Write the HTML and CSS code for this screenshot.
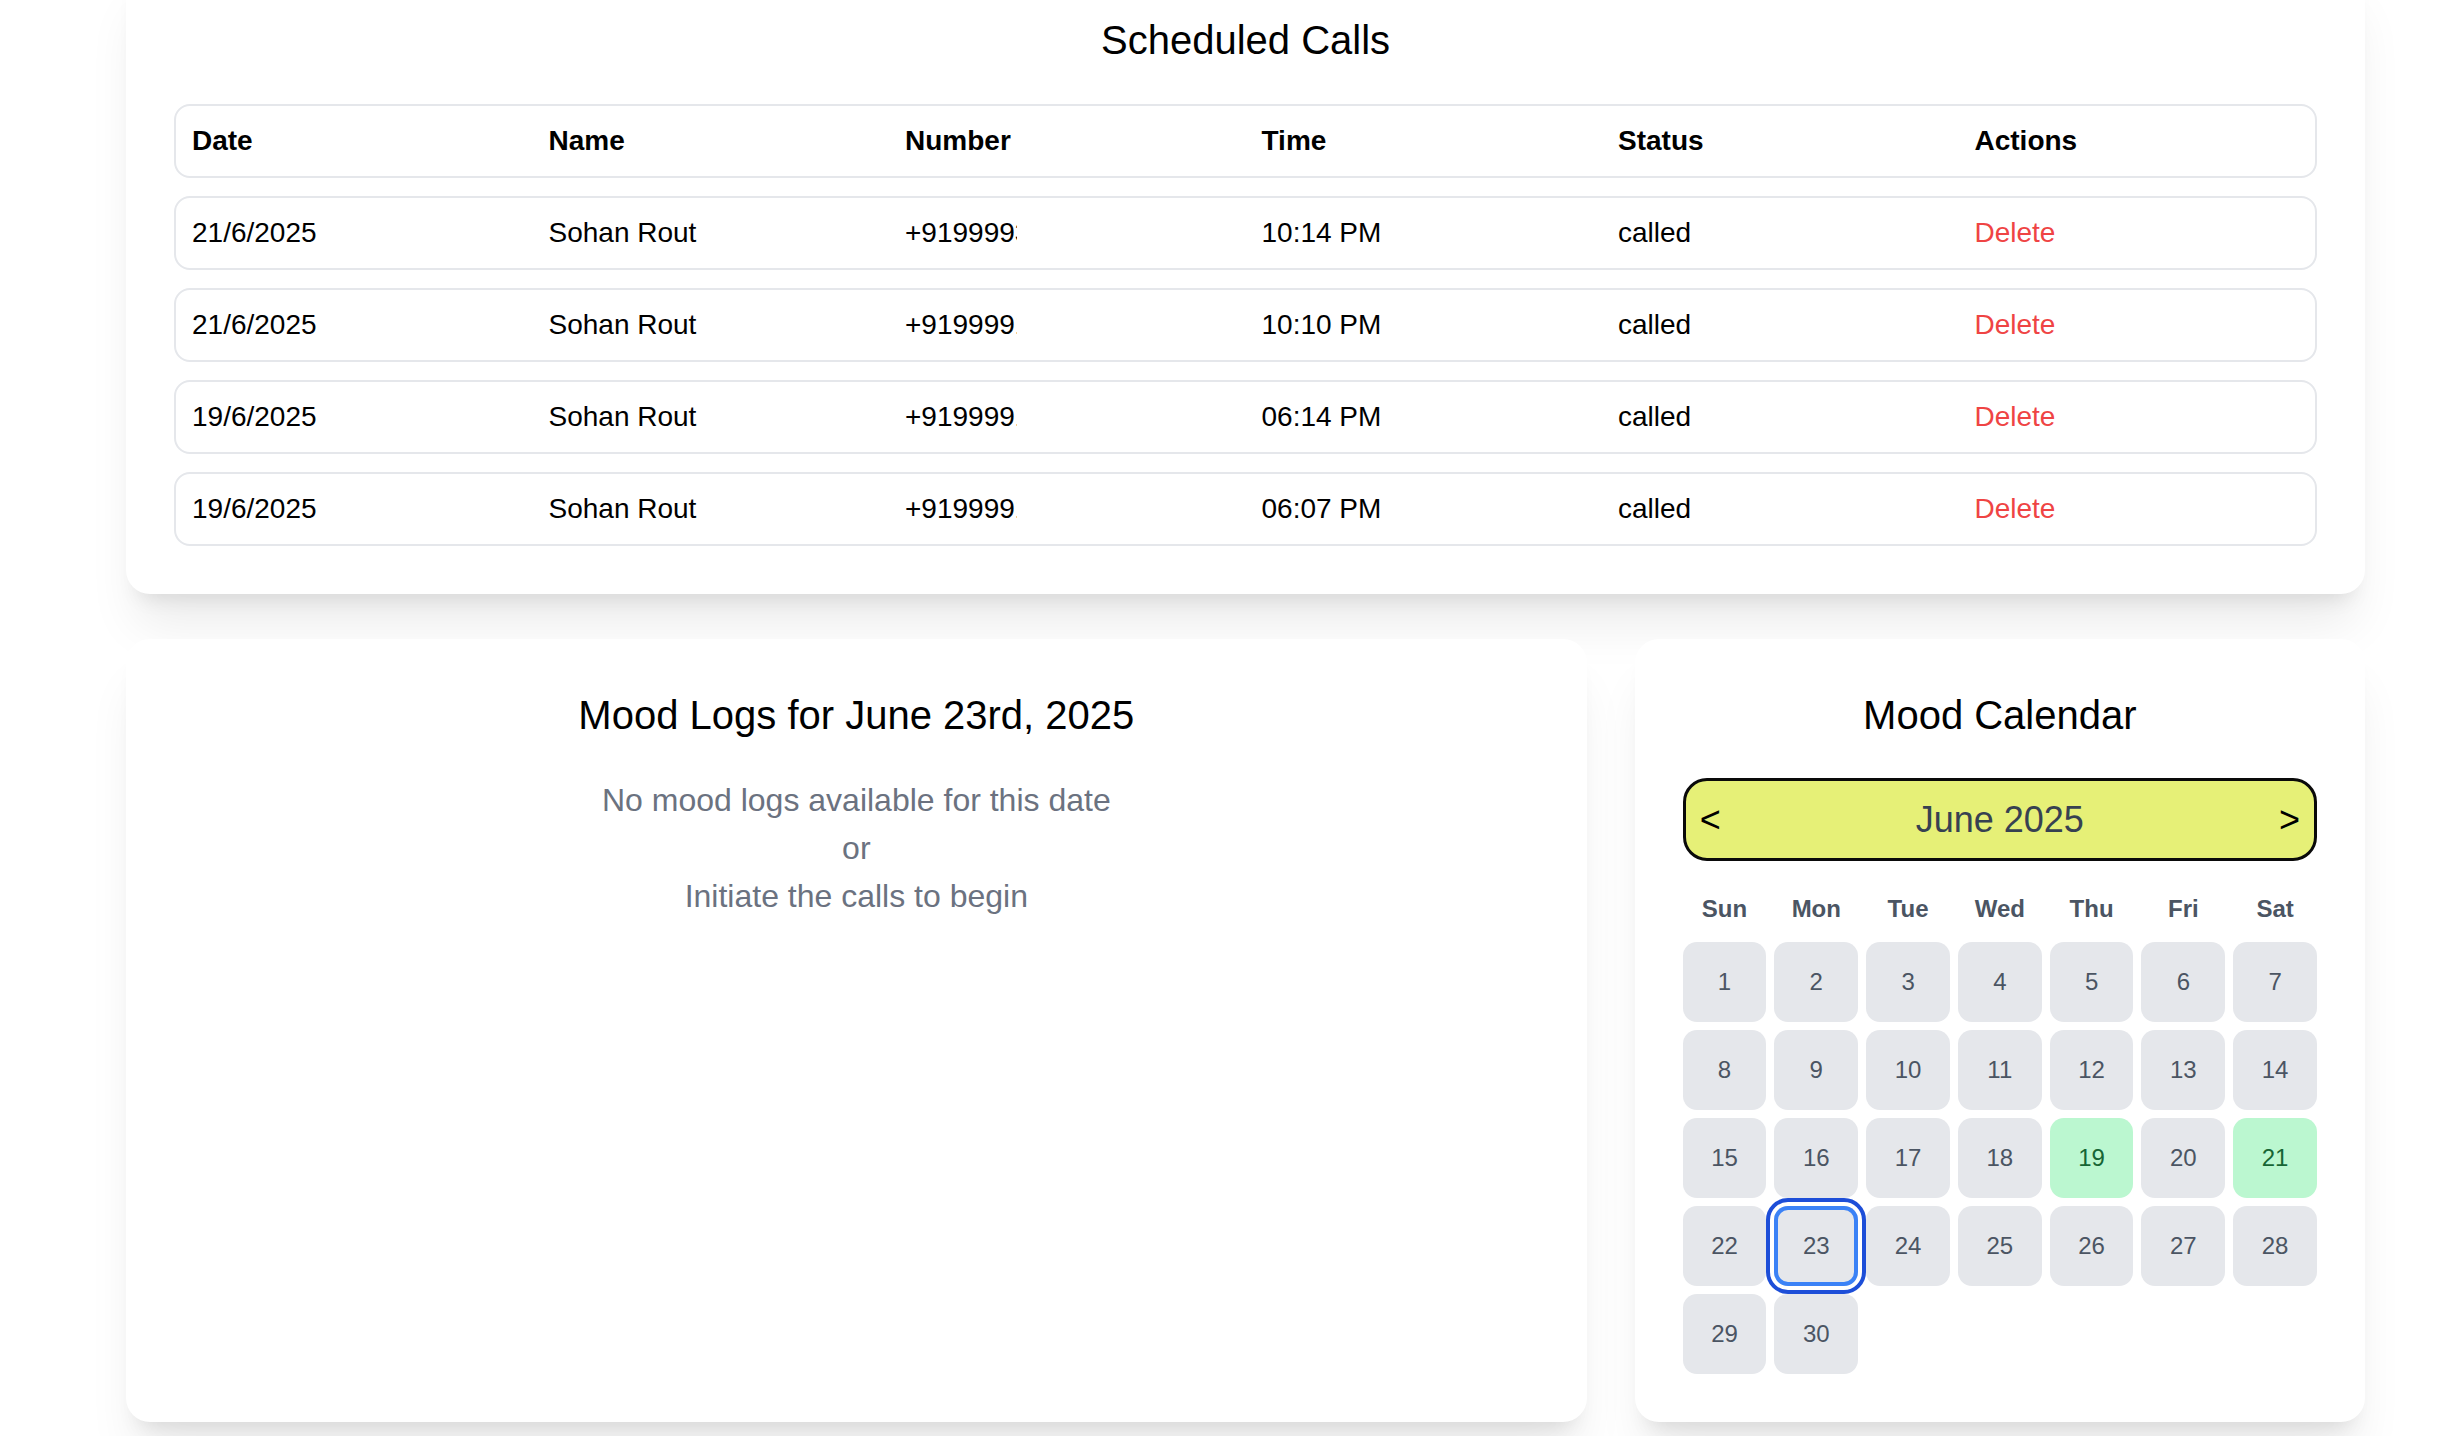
FILE: index.html
```html
<!DOCTYPE html>
<html lang="en">
<head>
<meta charset="utf-8">
<title>Dashboard</title>
<link rel="stylesheet" href="styles.css">
</head>
<body>
<main class="page">
  <section class="card calls">
    <h2 class="card-title">Scheduled Calls</h2>
    <div class="table">
      <div class="trow thead">
        <div class="cell">Date</div>
        <div class="cell">Name</div>
        <div class="cell">Number</div>
        <div class="cell">Time</div>
        <div class="cell">Status</div>
        <div class="cell">Actions</div>
      </div>
      <div class="trow">
        <div class="cell">21/6/2025</div>
        <div class="cell">Sohan Rout</div>
        <div class="cell"><span class="num">+9199993456789</span></div>
        <div class="cell">10:14 PM</div>
        <div class="cell">called</div>
        <div class="cell"><span class="del">Delete</span></div>
      </div>
      <div class="trow">
        <div class="cell">21/6/2025</div>
        <div class="cell">Sohan Rout</div>
        <div class="cell"><span class="num">+9199991234567</span></div>
        <div class="cell">10:10 PM</div>
        <div class="cell">called</div>
        <div class="cell"><span class="del">Delete</span></div>
      </div>
      <div class="trow">
        <div class="cell">19/6/2025</div>
        <div class="cell">Sohan Rout</div>
        <div class="cell"><span class="num">+9199991234567</span></div>
        <div class="cell">06:14 PM</div>
        <div class="cell">called</div>
        <div class="cell"><span class="del">Delete</span></div>
      </div>
      <div class="trow">
        <div class="cell">19/6/2025</div>
        <div class="cell">Sohan Rout</div>
        <div class="cell"><span class="num">+9199991234567</span></div>
        <div class="cell">06:07 PM</div>
        <div class="cell">called</div>
        <div class="cell"><span class="del">Delete</span></div>
      </div>
    </div>
  </section>

  <div class="lower">
    <section class="card logs">
      <h2 class="card-title logs-title">Mood Logs for June 23rd, 2025</h2>
      <p class="empty">No mood logs available for this date<br>or<br>Initiate the calls to begin</p>
    </section>

    <section class="card calendar">
      <h2 class="card-title cal-title">Mood Calendar</h2>
      <div class="month-bar">
        <span class="arrow">&lt;</span>
        <span class="month">June 2025</span>
        <span class="arrow">&gt;</span>
      </div>
      <div class="weekdays">
        <span>Sun</span><span>Mon</span><span>Tue</span><span>Wed</span><span>Thu</span><span>Fri</span><span>Sat</span>
      </div>
      <div class="days">
        <div class="day">1</div><div class="day">2</div><div class="day">3</div><div class="day">4</div><div class="day">5</div><div class="day">6</div><div class="day">7</div>
        <div class="day">8</div><div class="day">9</div><div class="day">10</div><div class="day">11</div><div class="day">12</div><div class="day">13</div><div class="day">14</div>
        <div class="day">15</div><div class="day">16</div><div class="day">17</div><div class="day">18</div><div class="day logged">19</div><div class="day">20</div><div class="day logged">21</div>
        <div class="day">22</div><div class="day selected">23</div><div class="day">24</div><div class="day">25</div><div class="day">26</div><div class="day">27</div><div class="day">28</div>
        <div class="day">29</div><div class="day">30</div>
      </div>
    </section>
  </div>
</main>
</body>
</html>
```

FILE: styles.css
```css
* { box-sizing: border-box; }

html, body {
  margin: 0;
  padding: 0;
  background: #ffffff;
}

body {
  font-family: "Liberation Sans", Arial, Helvetica, sans-serif;
  color: #000;
}

.page {
  margin-top: -36px;
  padding: 0 79px 40px 126px;
}

.card {
  background: #fff;
  border-radius: 24px;
  padding: 48px;
  box-shadow: 0 40px 50px -10px rgba(0, 0, 0, 0.08), 0 16px 20px -12px rgba(0, 0, 0, 0.1);
}

.card-title {
  margin: 0;
  font-size: 40px;
  line-height: 56px;
  font-weight: 400;
  text-align: center;
}

.calls .card-title { margin-bottom: 36px; }

.table {
  display: flex;
  flex-direction: column;
  gap: 18px;
}

.trow {
  display: grid;
  grid-template-columns: repeat(6, 1fr);
  align-items: center;
  height: 74px;
  border: 2px solid #e5e7eb;
  border-radius: 16px;
  font-size: 28px;
}

.thead { font-weight: 700; }

.cell {
  padding: 0 16px;
  white-space: nowrap;
  line-height: 40px;
}

.num {
  display: inline-block;
  width: 112px;
  overflow: hidden;
  white-space: nowrap;
  vertical-align: top;
}

.del { color: #ef4444; }

.lower {
  margin-top: 45px;
  display: grid;
  grid-template-columns: 2fr 1fr;
  gap: 48px;
}

.logs-title { margin-bottom: 33px; }

.empty {
  margin: 0;
  text-align: center;
  font-size: 32px;
  line-height: 48px;
  color: #6b7280;
}

.cal-title { margin-bottom: 35px; }

.month-bar {
  display: flex;
  align-items: center;
  justify-content: space-between;
  height: 83px;
  padding: 0 14px;
  background: #e6f077;
  border: 3px solid #0a0a0a;
  border-radius: 24px;
}

.arrow {
  font-size: 36px;
  line-height: 40px;
  color: #000;
}

.month {
  font-size: 36px;
  line-height: 40px;
  color: #374151;
}

.weekdays {
  margin: 32px 0 17px;
  display: grid;
  grid-template-columns: repeat(7, 1fr);
  gap: 8px;
  text-align: center;
  font-size: 24px;
  line-height: 32px;
  font-weight: 700;
  color: #4b5563;
}

.days {
  display: grid;
  grid-template-columns: repeat(7, 1fr);
  grid-auto-rows: 80px;
  gap: 8px;
}

.day {
  display: flex;
  align-items: center;
  justify-content: center;
  background: #e5e7eb;
  border-radius: 14px;
  font-size: 24px;
  color: #4b5563;
}

.day.logged {
  background: #bbf7d0;
  color: #166534;
}

.day.selected {
  box-shadow: inset 0 0 0 4px #3b82f6;
  outline: 4px solid #1d4ed8;
  outline-offset: 4px;
}
```
